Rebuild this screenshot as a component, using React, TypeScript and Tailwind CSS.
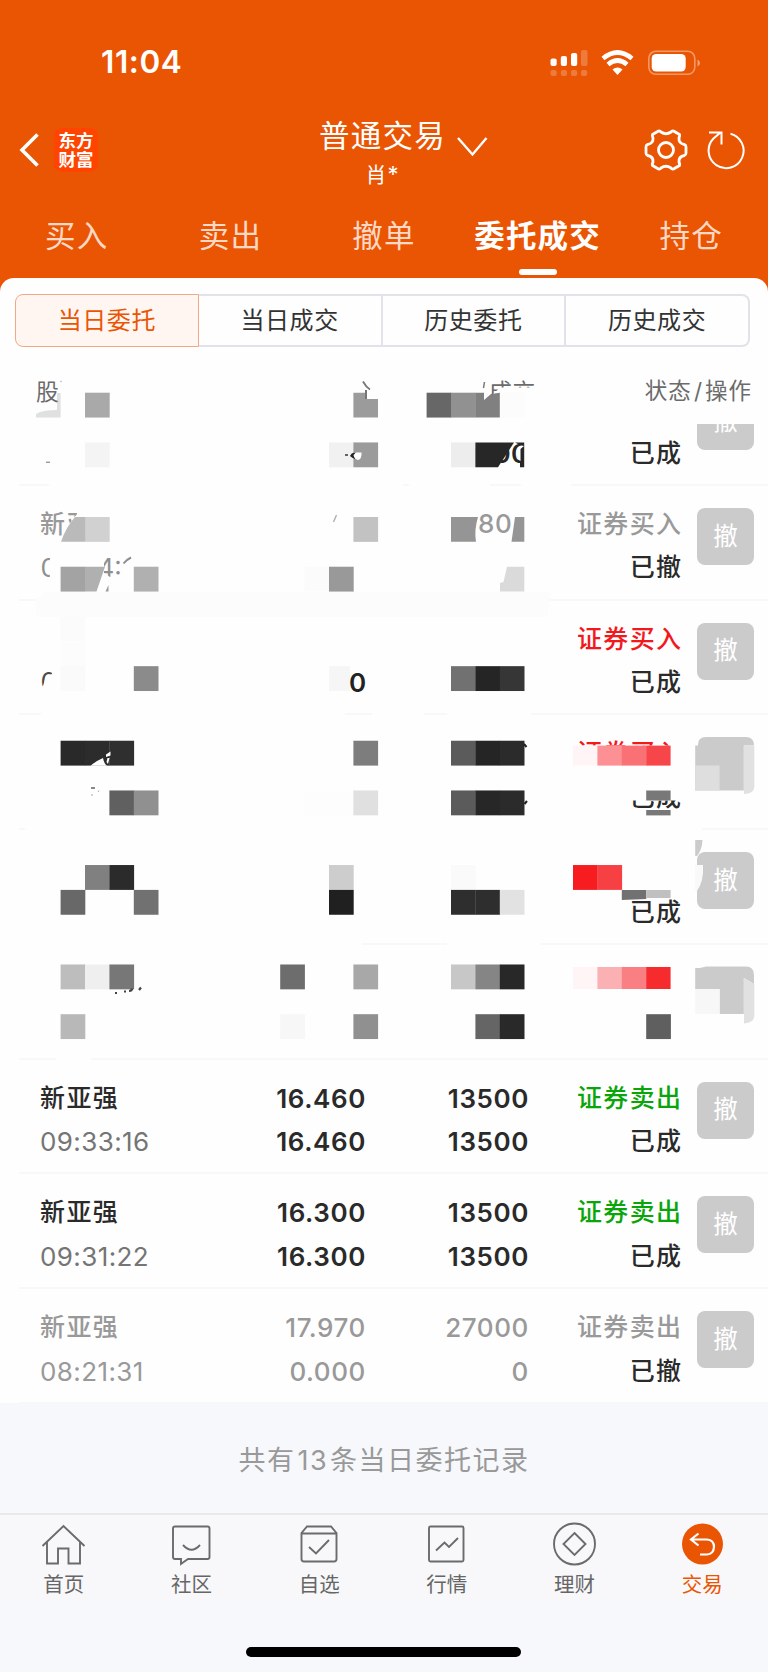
import React from "react";

type Order = {
  name?: string;
  time?: string;
  price?: string;
  deal?: string;
  qty?: string;
  dealQty?: string;
  side?: string;
  sideColor?: string;
  status?: string;
  muted?: boolean;
  button?: boolean;
};

const orders: Order[] = [
  { status: "已成", button: true },
  { side: "证券买入", sideColor: "text-[#999999]", status: "已撤", button: true },
  { side: "证券买入", sideColor: "text-[#f2181c]", status: "已成", button: true },
  { side: "证券买入", sideColor: "text-[#f2181c]", status: "已成" },
  { status: "已成", button: true },
  {},
  { name: "新亚强", time: "09:33:16", price: "16.460", deal: "16.460", qty: "13500", dealQty: "13500", side: "证券卖出", sideColor: "text-[#0aa50a]", status: "已成", button: true },
  { name: "新亚强", time: "09:31:22", price: "16.300", deal: "16.300", qty: "13500", dealQty: "13500", side: "证券卖出", sideColor: "text-[#0aa50a]", status: "已成", button: true },
  { name: "新亚强", time: "08:21:31", price: "17.970", deal: "0.000", qty: "27000", dealQty: "0", side: "证券卖出", sideColor: "text-[#999999]", status: "已撤", muted: true, button: true },
];

const CELL_W = 24.4;
const CELL_H = 24.86;

// [column, row, colour] of each fully visible mosaic cell
const cells: [number, number, string][] = [
  [2, 0, "#a9a9a9"], [16, 0, "#676767"], [17, 0, "#919191"], [19, 0, "#fcfcfc"],
  [2, 2, "#f4f4f4"], [12, 2, "#f1f1f1"], [13, 2, "#9b9b9b"], [17, 2, "#ededed"],
  [2, 5, "#d1d1d1"], [13, 5, "#c2c2c2"],
  [1, 7, "#a3a3a3"], [4, 7, "#b0b0b0"], [11, 7, "#fbfbfb"], [12, 7, "#999999"],
  [1, 9, "#fbfbfb"], [1, 10, "#fcfcfc"], [1, 11, "#fafafa"],
  [4, 11, "#8b8b8b"], [12, 11, "#f6f6f6"], [17, 11, "#717171"], [18, 11, "#252525"], [19, 11, "#363636"],
  [1, 14, "#292929"], [2, 14, "#2c2c2c"], [3, 14, "#2f2f2f"], [13, 14, "#7d7d7d"],
  [17, 14, "#5b5b5b"], [18, 14, "#252525"], [19, 14, "#2b2b2b"],
  [3, 16, "#606060"], [4, 16, "#909090"], [11, 16, "#fdfdfd"], [12, 16, "#fdfdfd"], [13, 16, "#e0e0e0"],
  [17, 16, "#5b5b5b"], [18, 16, "#272727"], [19, 16, "#2b2b2b"],
  [2, 19, "#808080"], [3, 19, "#2b2b2b"], [12, 19, "#cdcdcd"], [17, 19, "#fafafa"],
  [22, 19, "#f61c20"], [23, 19, "#f74044"],
  [1, 20, "#686868"], [4, 20, "#717171"], [12, 20, "#202020"], [17, 20, "#2e2e2e"], [18, 20, "#2e2e2e"], [19, 20, "#e2e2e2"],
  [1, 23, "#bdbdbd"], [2, 23, "#efefef"], [3, 23, "#777777"], [10, 23, "#6d6d6d"], [13, 23, "#a8a8a8"],
  [17, 23, "#c7c7c7"], [18, 23, "#858585"], [19, 23, "#282828"],
  [1, 25, "#b8b8b8"], [10, 25, "#f7f7f7"], [13, 25, "#909090"], [18, 25, "#656565"], [19, 25, "#292929"], [25, 25, "#5f5f5f"],
];

// white areas: x, y, width, height
const blanks: [number, number, number, number][] = [
  [49, 482, 354, 5], [409, 482, 81, 5], [521, 482, 50, 5],
  [41, 712, 304, 5], [372, 712, 52, 5], [447, 712, 84, 5],
  [25, 826, 677, 5],
  [16, 941, 346, 5], [447, 941, 93, 5],
  [56, 1056, 35, 5],
  [574, 745.6, 110, 22], [590, 778, 94, 22.5],
];

function Redaction() {
  return (
    <svg className="pointer-events-none absolute left-0 top-[76px]" width="768" height="707" viewBox="0 355 768 707">
      <defs>
        <clipPath id="c-head"><path d="M484 375H540V387.500H500L491 396V388.500H484z" /></clipPath>
        <clipPath id="c-00"><path d="M511 442H518L524 442V467H498z" /></clipPath>
        <clipPath id="c-name"><path d="M36 505H77V514L70 523L62 541H36z" /></clipPath>
        <clipPath id="c-time"><path d="M38 550H52L49 563L50 579H38zM104 560L110 556H122V577H110L104 573z" /></clipPath>
        <clipPath id="c-arc"><path d="M38 668H52V674L46 676L43 686H38z" /></clipPath>
      </defs>
      {blanks.map(([x, y, w, h]) => (
        <rect key={`${x}-${y}`} x={x} y={y} width={w} height={h} fill="#fefefe" />
      ))}
      <path d="M44 592H551L547 617H36V600z" fill="#fcfcfc" />
      {cells.map(([c, r, fill]) => (
        <rect key={`${c}-${r}`} x={36.2 + c * CELL_W} y={392.7 + r * CELL_H} width={CELL_W + 0.3} height={CELL_H} fill={fill} />
      ))}

      <g fontFamily="Inter, 'Noto Sans CJK SC', sans-serif">
        <path d="M36 417.5V414Q42 410 57 410V393H60.6V417.5z" fill="#e0e0e0" />
        <text x="36" y="400" fontSize="22.800" fill="#6b6b6b">股</text>
        <path d="M60 382l2-1" stroke="#bbb" strokeWidth="1" />
        <path d="M353.4 392.7H365V399H378V417.5H353.4z" fill="#9b9b9b" />
        <path d="M363 381.5Q366 387 370 389.5" stroke="#777" strokeWidth="1.800" fill="none" />
        <path d="M366 390V399" stroke="#666" strokeWidth="1.800" />
        <path d="M475.4 392.7H484V400L491 394L499.8 392.7V417.5H475.4z" fill="#808080" />
        <path d="M484.5 382L483.5 388" stroke="#777" strokeWidth="1.5" />
        <text x="489" y="400" fontSize="22.800" letterSpacing="0.8" fill="#6b6b6b" clipPath="url(#c-head)">成交</text>

        <path d="M46 462.3H50" stroke="#999" strokeWidth="1.4" />
        <path d="M345 455H348" stroke="#333" strokeWidth="1.5" />
        <path d="M350 456Q352 452 355 453V459Q352 458 350 456z" fill="#222" />
        <path d="M356 452.5H361.5Q362 459 358 460Q354 459 353.5 455z" fill="#fff" />
        <path d="M475.4 442.4H514L498 467.3H475.4z" fill="#272727" />
        <g clipPath="url(#c-00)">
          <text x="493.5" y="462.500" fontSize="26" fontWeight="600" letterSpacing="0.3" fill="#272727">00</text>
        </g>
        <path d="M515 442.4H524.2V467.3H520V462Q514 452 520 445z" fill="#272727" />
        <path d="M524 446Q517 444 516.5 452Q517 460 520.5 461V449z" fill="#fff" />

        <path d="M75 517H85.1V541.8H61Q66 527 75 517z" fill="#bababa" />
        <text x="40" y="533" fontSize="25" fontWeight="500" letterSpacing="1.4" fill="#999999" clipPath="url(#c-name)">新亚</text>
        <path d="M336.5 515L333.5 522" stroke="#aaa" strokeWidth="1.3" />
        <path d="M451 517H478Q474 530 476 541.8H451z" fill="#959595" />
        <path d="M515 517H524.3V541.8H511.5z" fill="#959595" />
        <text x="478" y="533" fontSize="26" fontWeight="500" letterSpacing="0.600" fill="#999999">80</text>
        <path d="M85 566.7H105L96.5 591.6H85z" fill="#b0b0b0" />
        <path d="M108.5 585V591.6H105.5z" fill="#999" />
        <text x="40.500" y="577" fontSize="26" fill="#8f8f8f" clipPath="url(#c-time)">0</text>
        <text x="97.500" y="577" fontSize="26" fill="#8f8f8f" clipPath="url(#c-time)">4:</text>
        <path d="M123.5 563.5Q126 560 131 557.5" stroke="#8f8f8f" strokeWidth="2" fill="none" />
        <path d="M507 566.7H524.3V591.6H500V583L503.500 582z" fill="#dadada" />

        <text x="40.5" y="691" fontSize="26" fill="#4a4a4a" clipPath="url(#c-arc)">0</text>
        <path d="M350 666H379V691H350z" fill="#fefefe" />
        <text x="349" y="691.5" fontSize="26" fontWeight="600" fill="#222222">0</text>

        <path d="M90.500 765.8Q96 761 103 758Q104 764 107 765.8z" fill="#fefefe" />
        <path d="M106 754.500L110.500 751.500V755.500L106 757zM107.500 758H109.500L108 764L106.500 762z" fill="#fefefe" />
        <path d="M91 788H95" stroke="#888" strokeWidth="2" />
        <path d="M91 795H93M98 792L99 790.500" stroke="#aaa" strokeWidth="1" />
        <path d="M524 744L526.500 747M524.500 804L527 801" stroke="#222" strokeWidth="2" />

        <rect x="573" y="745.6" width="24.4" height="20" fill="#fff5f6" />
        <rect x="597.4" y="745.6" width="24.700" height="20" fill="#fc9094" />
        <rect x="621.8" y="745.600" width="24.700" height="20" fill="#fa7175" />
        <rect x="646.2" y="745.600" width="24.400" height="20" fill="#f64649" />
        <rect x="646.2" y="790.5" width="24.400" height="10" fill="#787878" />
        <rect x="646.2" y="810" width="24.400" height="5.400" fill="#787878" />

        <path d="M695.200 745.600H698Q697.500 737 706 737H746Q754 737 754 745.600H743.800V790.500H695.200z" fill="#cbcbcb" />
        <path d="M695.200 765.500H719.600V790.500H695.200z" fill="#dedede" />
        <path d="M743.900 745.600H754.300V787Q754 794 744 794z" fill="#e1e1e1" />

        <path d="M621.800 890H646.200V899L621.800 900z" fill="#717171" />
        <path d="M646.200 890H670.600V898H646.200z" fill="#c0c0c0" />
        <path d="M695.200 840H702.500Q702 850 697 856H695.200z" fill="#cbcbcb" />
        <path d="M695.200 865H703Q704 881 697 891H695.200z" fill="#f9f9f9" />

        <path d="M115 993H117M124 991.500H126M129 991Q132 991 132 988.500M139 990L141 987.500" stroke="#444" strokeWidth="2.200" fill="none" />
        <rect x="573" y="967" width="24.400" height="22" fill="#fff5f6" />
        <rect x="597.400" y="967" width="24.700" height="22" fill="#fbb0b4" />
        <rect x="621.800" y="967" width="24.700" height="22" fill="#f97f82" />
        <rect x="646.200" y="967" width="24.400" height="22" fill="#f52b2e" />
        <path d="M695.200 968H700L706 966.500H746Q754 966.500 754 975V984L743.800 978V1014H719.600V989H695.200z" fill="#cbcbcb" />
        <path d="M695.200 989H719.600V1014H695.200z" fill="#f7f7f7" />
        <path d="M743.900 978L754.300 984V1016Q754 1023 744 1023.500z" fill="#e1e1e1" />
      </g>
    </svg>
  );
}

function OrderRow({ o }: { o: Order }) {
  const main = o.muted ? "text-[#999999]" : "text-[#2a2a2a]";
  const weight = o.muted ? "font-medium" : "font-semibold";
  const sub = o.muted ? "text-[#999999]" : "text-[#757575]";
  return (
    <div className="ml-[19px] grid h-[114.75px] shrink-0 grid-cols-[190px_157px_163px_153.5px_71.5px] border-b-2 border-[#f8f8f9] pt-[17px] text-[26px] leading-[43.5px]">
      <div className="flex flex-col pl-[21px]">
        <span className={`h-[43.5px] text-[25px] font-medium tracking-[1.4px] ${main}`}>{o.name}</span>
        <span className={`h-[43.5px] tracking-[0.4px] ${sub}`}>{o.time}</span>
      </div>
      <div className={`flex flex-col text-right tracking-[0.6px] ${weight} ${main}`}>
        <span className="h-[43.5px]">{o.price}</span>
        <span className="h-[43.5px]">{o.deal}</span>
      </div>
      <div className={`flex flex-col text-right tracking-[0.6px] ${weight} ${main}`}>
        <span className="h-[43.5px]">{o.qty}</span>
        <span className="h-[43.5px]">{o.dealQty}</span>
      </div>
      <div className="flex flex-col items-end text-[25px] font-medium tracking-[1.4px]">
        <span className={`h-[43.5px] ${o.sideColor ?? ""}`}>{o.side}</span>
        <span className="h-[43.5px] text-[#2a2a2a]">{o.status}</span>
      </div>
      {o.button && (
        <button className="ml-[14.5px] mt-[5px] flex h-[57px] w-[57px] items-center justify-center rounded-[8px] bg-[#cbcbcb] text-[24.500px] text-white">撤</button>
      )}
    </div>
  );
}

const tabs = ["买入", "卖出", "撤单", "委托成交", "持仓"];
const segments = ["当日委托", "当日成交", "历史委托", "历史成交"];

const icons: Record<string, React.ReactNode> = {
  首页: <path d="M2.500 24L23.500 4L44.500 24M7 20V41.500H18V26.500H28.500V41.500H40V20" />,
  社区: <><path d="M7 4.500H39.500Q41.500 4.500 41.500 6.500V35Q41.500 37 39.500 37H20L13 42V37H7Q5 37 5 35V6.500Q5 4.500 7 4.500z" /><path d="M15 23Q23.500 32.500 32 23" /></>,
  自选: <><path d="M11 4.500H35L40.500 11V37Q40.500 39.500 38 39.500H8Q5.500 39.500 5.500 37V11zM5.500 11.500H40.500" /><path d="M13 25L20 31.500L33 18" /></>,
  行情: <><rect x="6" y="4.500" width="34.500" height="35" rx="1.500" /><path d="M13 28.500L21.500 20.500L26 25L35 16" /></>,
  理财: <><circle cx="23.500" cy="22" r="20.500" /><path d="M23.500 11L34.500 22L23.500 33L12.500 22z" /></>,
  交易: <><circle cx="23.500" cy="22" r="20.500" fill="#ea5504" stroke="none" /><path d="M19.500 11.500L12 17.500L19.500 23.500M12 17.500H28Q35 18 35 25Q34.500 32 28 32.500H21" stroke="#fff" strokeWidth="2.200" /></>,
};

export default function App() {
  return (
    <div className="flex h-[1672px] w-[768px] flex-col overflow-hidden bg-[#ea5504] font-[Inter,'Noto_Sans_CJK_SC',sans-serif]">
      <header className="flex h-[278px] shrink-0 flex-col text-white">
        <div className="flex h-[103px] items-center pl-[101px] pr-[66px] pt-[21px]">
          <span className="text-[31.500px] font-semibold leading-none tracking-[0.600px]">11:04</span>
          <svg className="ml-auto" width="152" height="30" viewBox="0 0 152 30" fill="#fff">
            <rect x="0.500" y="11.500" width="6.200" height="7.500" rx="2" />
            <rect x="10.800" y="9" width="6.200" height="10" rx="2" />
            <rect x="21" y="6" width="6.200" height="13" rx="2" />
            <g opacity="0.22">
              <rect x="31" y="3" width="6.500" height="16" rx="2" />
              <rect x="0.500" y="23" width="6.200" height="6" rx="2" />
              <rect x="10.800" y="23" width="6.200" height="6" rx="2" />
              <rect x="21" y="23" width="6.200" height="6" rx="2" />
              <rect x="31" y="23" width="6.200" height="6" rx="2" />
            </g>
            <g fill="none" stroke="#fff" strokeWidth="4.600">
              <path d="M53 11.500Q67.500 -0.500 82 11.500" />
              <path d="M58 17.500Q67.500 9.500 77 17.500" />
            </g>
            <path d="M62.500 22.500Q67.500 18.500 72.500 22.500L67.500 28z" />
            <rect x="98.800" y="4.300" width="46" height="23" rx="7" fill="none" stroke="#fff" strokeOpacity="0.4" strokeWidth="1.600" />
            <rect x="101.700" y="7" width="34" height="17.500" rx="4.500" />
            <path d="M147.500 12.500Q150 13.500 150 16Q150 18.500 147.500 19.500z" opacity="0.45" />
          </svg>
        </div>
        <div className="grid h-[94px] grid-cols-[1fr_auto_1fr] items-center">
          <div className="flex items-center pl-[18px]">
            <svg width="22" height="36" viewBox="0 0 22 36" fill="none" stroke="#fff" strokeWidth="3.600"><path d="M19.500 2.500L4 18L19.500 33.500" /></svg>
            <div className="ml-[14px] flex h-[44px] w-[44px] flex-col items-center justify-center rounded-[8px] bg-[#ff4400] text-[17.500px] font-bold leading-[19px]">
              <span>东方</span>
              <span>财富</span>
            </div>
          </div>
          <div className="flex items-center pl-[40px]">
            <div className="flex flex-col items-center">
              <span className="mt-[6px] text-[30.500px] leading-[40px] tracking-[1.300px]">普通交易</span>
              <span className="mt-[2px] text-[21px] leading-[32px] tracking-[1px]">肖<span className="text-[22px]">*</span></span>
            </div>
            <svg className="ml-[9px] mt-[-8px]" width="34" height="22" viewBox="0 0 34 22" fill="none" stroke="#fff" strokeWidth="2.400"><path d="M3 3L17.500 19.500L31.500 3" /></svg>
          </div>
          <div className="flex items-center justify-end gap-[18px] pr-[22px]">
            <svg width="44" height="44" viewBox="-22 -22 44 44" fill="none" stroke="#fff" strokeWidth="2.800" strokeLinejoin="round">
              <path d="M-13.500 -15.500L-7.500 -19Q-6 -19.500 -5 -18Q0 -14.500 5 -18Q6 -19.500 7.500 -19L13.500 -15.500Q14 -14 13 -12Q12.500 -6.500 18.500 -5.500Q20 -5 20 -3V3Q20 5 18.500 5.500Q12.500 6.500 13 12Q14 14 13.500 15.500L7.500 19Q6 19.500 5 18Q0 14.500 -5 18Q-6 19.500 -7.500 19L-13.500 15.500Q-14 14 -13 12Q-12.500 6.500 -18.500 5.500Q-20 5 -20 3V-3Q-20 -5 -18.500 -5.500Q-12.500 -6.500 -13 -12Q-14 -14 -13.500 -15.500z" />
              <circle r="7.500" />
            </svg>
            <svg width="40" height="40" viewBox="0 0 40 40" fill="none" stroke="#fff" strokeWidth="2">
              <path d="M24.500 3.700A17.500 17.500 0 1 1 7.500 8.500L14.500 2.500M3 2.500H15.500V14.500" />
            </svg>
          </div>
        </div>
        <nav className="grid flex-1 grid-cols-5">
          {tabs.map((t) => {
            const on = t === "委托成交";
            return (
              <div key={t} className={`flex flex-col items-center pt-[18px] text-[30.500px] leading-[42px] tracking-[1.200px] ${on ? "font-bold text-white" : "text-[#ffd9c5]"}`}>
                <span>{t}</span>
                {on && <span className="mt-[11.500px] h-[6px] w-[38px] rounded-[3px] bg-white" />}
              </div>
            );
          })}
        </nav>
      </header>

      <main className="relative flex h-[1125px] shrink-0 flex-col rounded-t-[14px] bg-[#fefefe]">
        <div className="ml-[15px] mr-[18px] mt-[16px] flex h-[53px] shrink-0">
          {segments.map((s, i) => (
            <div
              key={s}
              className={`flex flex-1 items-center justify-center pt-[1px] text-[24px] tracking-[0.600px] ${
                i === 0
                  ? "rounded-l-[8px] border-[1.500px] border-[#f3a885] bg-[#fff5f1] text-[#ea5504]"
                  : `border-y-2 border-r-2 border-[#e2e2ea] text-[#333333] ${i === 3 ? "rounded-r-[8px]" : ""}`
              }`}
            >
              {s}
            </div>
          ))}
        </div>
        <div className="flex h-[76.500px] shrink-0 items-start justify-end pr-[16px] pt-[28px] text-[22.500px] leading-[32px] tracking-[1px] text-[#6b6b6b]">
          状态<span className="px-[2px]">/</span>操作
        </div>
        <div className="flex flex-1 flex-col overflow-hidden">
          <div className="-mt-[52.500px] flex flex-col">
            {orders.map((o, i) => (
              <OrderRow key={i} o={o} />
            ))}
          </div>
        </div>
        <div className="absolute left-0 top-px">
          <div className="relative">
            <Redaction />
          </div>
        </div>
      </main>

      <footer className="flex flex-1 flex-col bg-[#f7f8fb]">
        <div className="flex h-[110px] items-center justify-center pt-[6px] text-[27px] tracking-[1.500px] text-[#999999]">共有<span className="px-[2px]">13</span>条当日委托记录</div>
        <div className="grid grid-cols-6 border-t-2 border-[#e9e9ed] bg-[#f8f8fb] pr-[2px] pt-[7px]">
          {Object.entries(icons).map(([label, icon]) => (
            <div key={label} className={`flex flex-col items-center text-[20.500px] leading-[30px] ${label === "交易" ? "text-[#ea5504]" : "text-[#666666]"}`}>
              <svg width="47" height="46" viewBox="0 0 47 46" fill="none" stroke="#6b6b6b" strokeWidth="1.900">{icon}</svg>
              <span className="mt-[1.500px]">{label}</span>
            </div>
          ))}
        </div>
        <div className="ml-[246px] mt-[47.500px] h-[10px] w-[275px] rounded-full bg-black" />
      </footer>
    </div>
  );
}
